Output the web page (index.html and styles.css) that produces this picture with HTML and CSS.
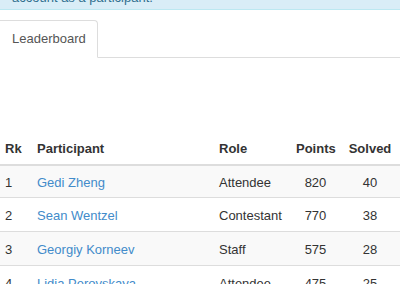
FILE: index.html
```
<!DOCTYPE html>
<html>
<head>
<meta charset="utf-8">
<link rel="stylesheet" href="styles.css">
</head>
<body>
<div class="alert"><div class="alert-text">account as a participant.</div></div>
<ul class="tabs">
  <li class="tab active">Leaderboard</li>
</ul>
<div class="board">
<table class="table">
  <colgroup>
    <col class="c-rk"><col class="c-name"><col class="c-role"><col class="c-pts"><col class="c-solved">
  </colgroup>
  <thead>
    <tr><th>Rk</th><th>Participant</th><th>Role</th><th class="num">Points</th><th class="num">Solved</th></tr>
  </thead>
  <tbody>
    <tr><td>1</td><td><a href="#">Gedi Zheng</a></td><td>Attendee</td><td class="num">820</td><td class="num">40</td></tr>
    <tr><td>2</td><td><a href="#">Sean Wentzel</a></td><td>Contestant</td><td class="num">770</td><td class="num">38</td></tr>
    <tr><td>3</td><td><a href="#">Georgiy Korneev</a></td><td>Staff</td><td class="num">575</td><td class="num">28</td></tr>
    <tr><td>4</td><td><a href="#">Lidia Perovskaya</a></td><td>Attendee</td><td class="num">475</td><td class="num">25</td></tr>
  </tbody>
</table>
</div>
</body>
</html>
```
FILE: styles.css
```
html, body {
  margin: 0;
  padding: 0;
  background: #fff;
  overflow: hidden;
}
body {
  font-family: "Liberation Sans", Arial, Helvetica, sans-serif;
  font-size: 13px;
  line-height: 19px;
  color: #333;
}
.alert {
  height: 9px;
  overflow: hidden;
  background: #d9edf7;
  border-bottom: 1px solid #bce8f1;
  color: #31708f;
  padding: 0 12px;
}
.alert-text {
  line-height: 17px;
  margin-top: -11px;
  white-space: nowrap;
}
.tabs {
  list-style: none;
  margin: 10px 0 0 0;
  padding: 0;
  display: flex;
  border-bottom: 1px solid #ddd;
}
.tab {
  box-sizing: border-box;
  width: 99px;
  margin-left: -1px;
  margin-bottom: -1px;
  padding: 8px 0 9px 12px;
  border: 1px solid #ddd;
  border-bottom-color: transparent;
  border-radius: 0 4px 0 0;
  background: #fff;
  color: #555;
}
.board {
  padding-top: 73px;
}
.table {
  width: 400px;
  table-layout: fixed;
  border-collapse: collapse;
  border-spacing: 0;
}
.c-rk { width: 32px; }
.c-name { width: 182px; }
.c-role { width: 77px; }
.c-pts { width: 49px; }
.c-solved { width: 60px; }
.table th,
.table td {
  text-align: left;
  padding: 8px 5px 6px 5px;
  white-space: nowrap;
  overflow: hidden;
}
.table th {
  font-weight: bold;
  border-bottom: 2px solid #ddd;
}
.table td {
  border-top: 1px solid #ddd;
}
.table tbody tr:first-child td {
  padding-top: 7px;
  padding-bottom: 5px;
}
.table tbody tr:nth-child(odd) td {
  background: #f9f9f9;
}
.table .num {
  text-align: center;
}
.table a {
  color: #428bca;
  text-decoration: none;
}
```
